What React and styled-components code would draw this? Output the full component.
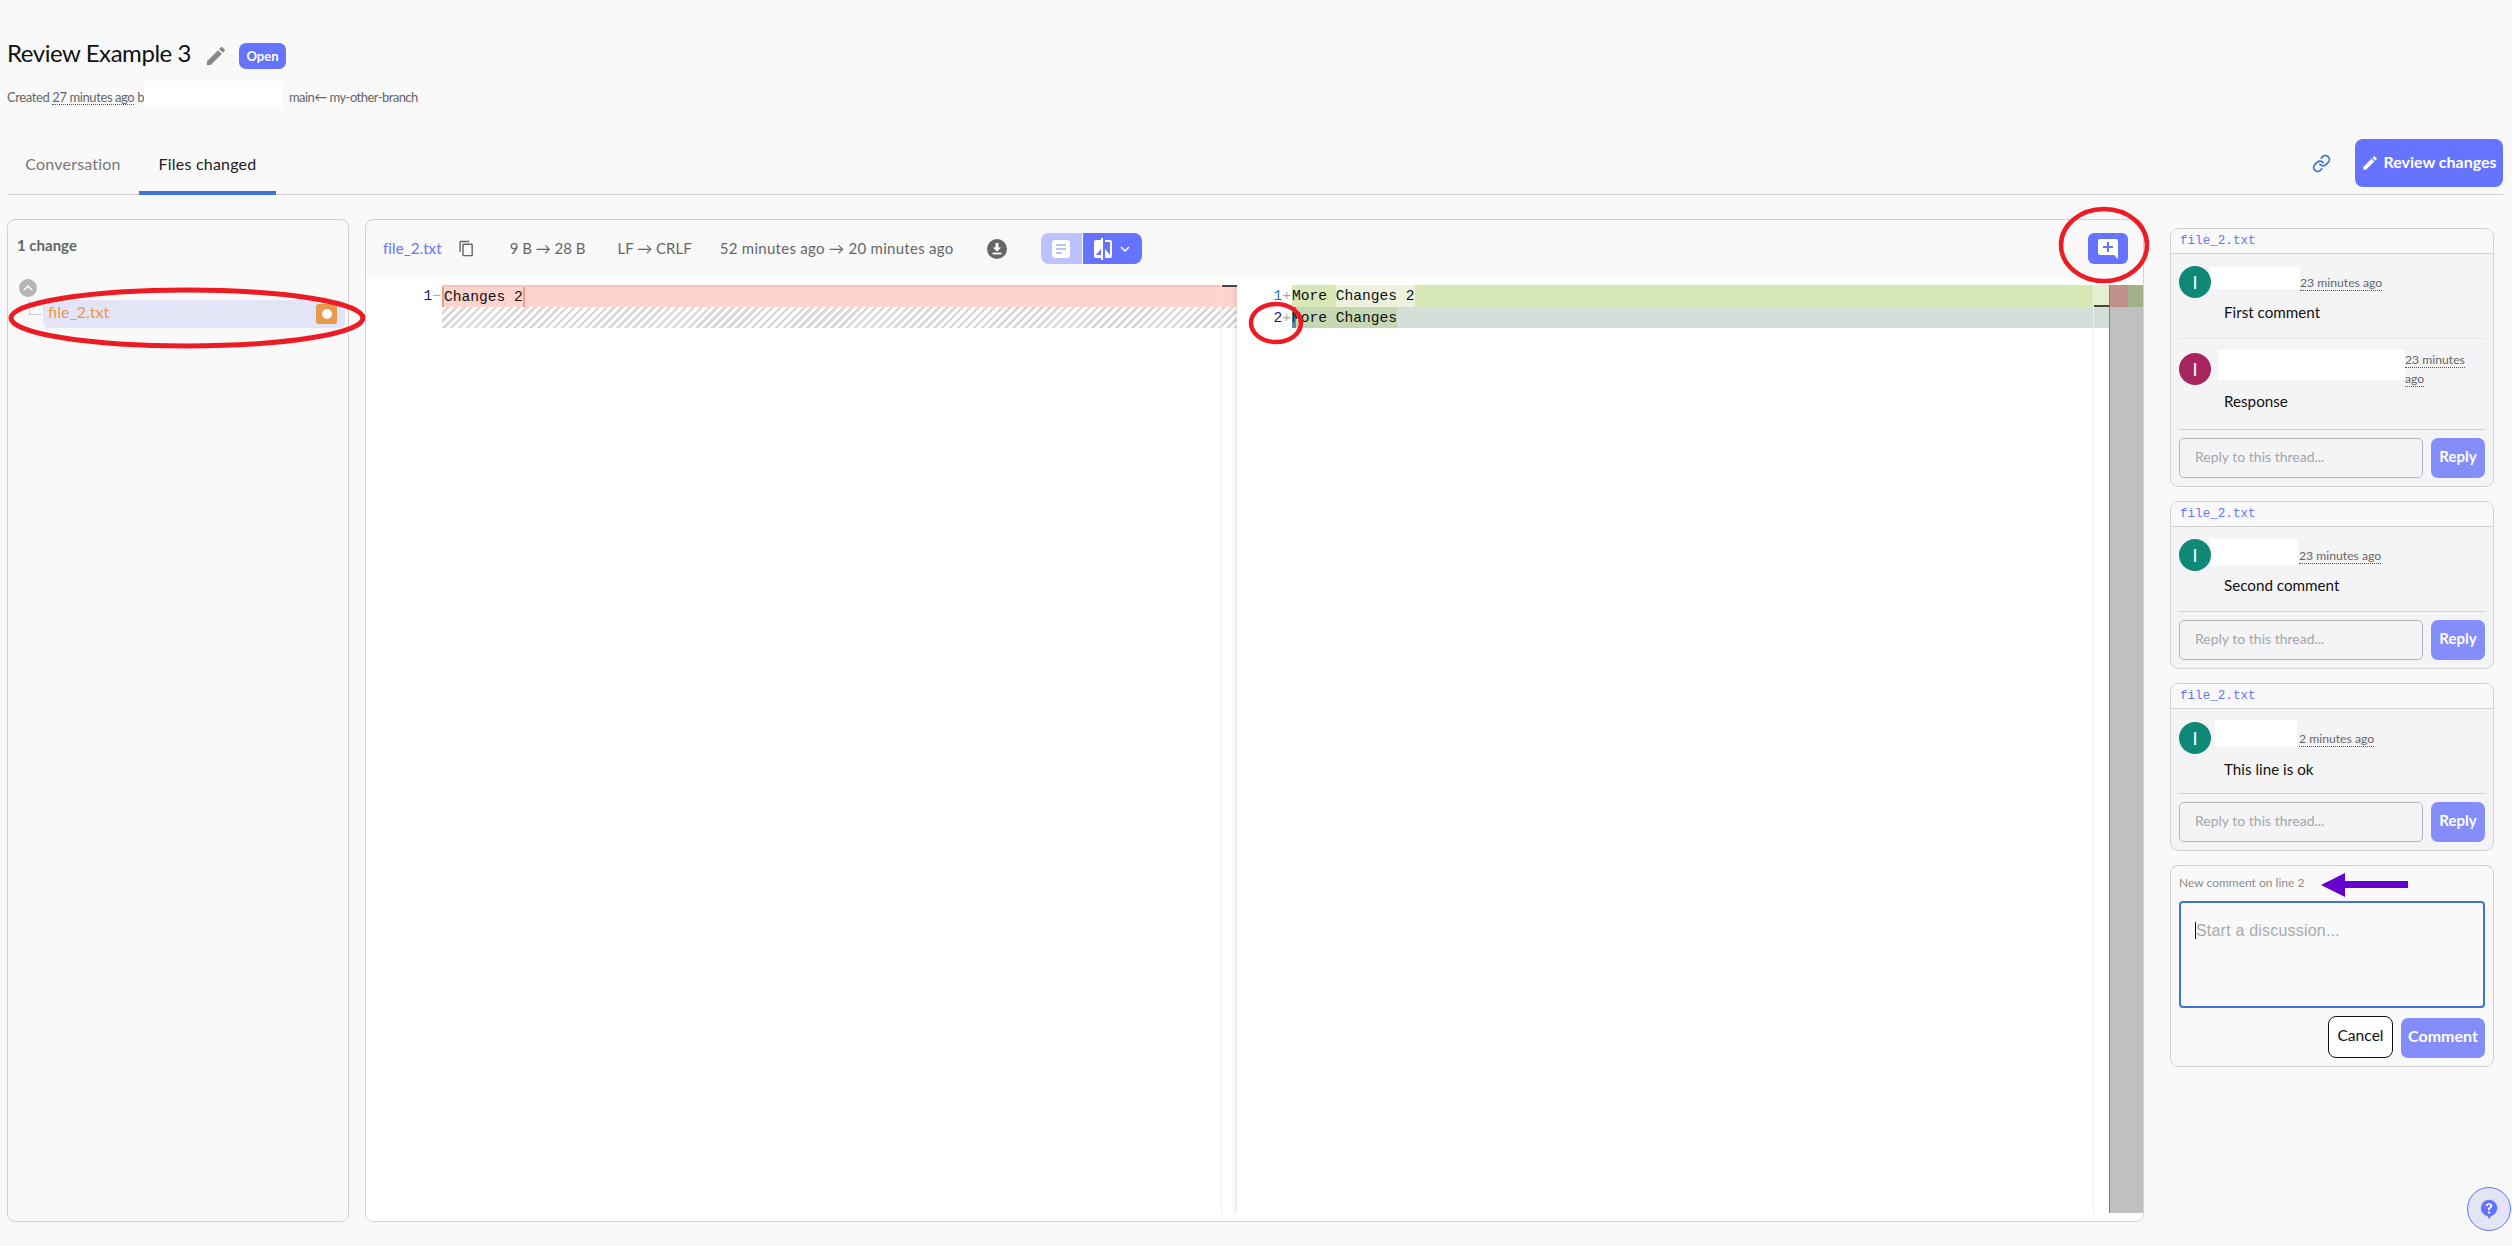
import React from "react";
import styled, { createGlobalStyle } from "styled-components";
import { MdEdit, MdContentCopy, MdExpandLess, MdExpandMore, MdAddComment, MdCompare } from "react-icons/md";
import { Link as LinkIcon } from "lucide-react";

const GlobalStyle = createGlobalStyle`
  html, body {
    margin: 0;
    padding: 0;
    background: #f9f9fa;
    font-family: Lato, "Open Sans", sans-serif;
    color: #111;
  }
  * { box-sizing: border-box; }
`;

const Page = styled.div`
  position: relative;
  width: 2512px;
  height: 1246px;
  overflow: hidden;
  padding: 43px 9px 0 7px;
`;

const TitleRow = styled.div`
  display: flex;
  align-items: center;
  height: 26px;
`;

const Title = styled.h1`
  margin: 0 0 6px;
  font-size: 24px;
  font-weight: 400;
  line-height: 26px;
  letter-spacing: -0.45px;
  color: #111;
`;

const TitleEdit = styled.span`
  display: flex;
  margin-left: 13px;
  color: #888;
  font-size: 24px;
`;

const Badge = styled.span`
  margin-left: 11px;
  width: 47px;
  height: 26px;
  border-radius: 7px;
  background: #6673ff;
  color: #fff;
  font-size: 13px;
  font-weight: 700;
  display: flex;
  align-items: center;
  justify-content: center;
`;

const SubRow = styled.div`
  display: flex;
  align-items: center;
  height: 26px;
  margin-top: 12px;
  padding-top: 6px;
  font-size: 13px;
  letter-spacing: -0.4px;
  color: #666;
  white-space: pre;
`;

const TimeAgo = styled.span`
  color: #666;
  border-bottom: 1px dotted #555;
  line-height: 14px;
`;

const BranchText = styled.span`
  margin-left: 3px;
  letter-spacing: -0.55px;
`;

const Redact = styled.span`
  display: block;
  flex: none;
  background: #fff;
  width: ${(props) => props.$w}px;
  height: ${(props) => props.$h}px;
  margin: ${(props) => props.$mt || 0}px 0 ${(props) => props.$mb || 0}px ${(props) => props.$ml || 0}px;
`;

const TabBar = styled.div`
  display: flex;
  align-items: center;
  height: 63px;
  margin-top: 25px;
  border-bottom: 1px solid #d2d2d2;
`;

const Tab = styled.div`
  height: 63px;
  width: ${(props) => props.$w}px;
  padding-top: ${(props) => (props.$active ? "4px" : "0")};
  display: flex;
  align-items: center;
  justify-content: center;
  font-size: 16px;
  letter-spacing: 0.2px;
  color: ${(props) => (props.$active ? "#222" : "#777")};
  border-bottom: ${(props) => (props.$active ? "4px solid #3f74d6" : "none")};
  margin-bottom: -1px;
`;

const TabActions = styled.div`
  margin-left: auto;
  display: flex;
  align-items: center;
  gap: 24px;
  color: #3f74d6;
`;

const ReviewButton = styled.button`
  width: 148px;
  height: 48px;
  border: none;
  border-radius: 8px;
  background: #6673ff;
  color: #fff;
  font-family: inherit;
  font-size: 16px;
  font-weight: 700;
  display: flex;
  align-items: center;
  justify-content: center;
  gap: 4px;
  padding: 0;
  white-space: nowrap;
`;

const ReviewLabel = styled.span`
  margin-bottom: 4px;
`;

const Columns = styled.div`
  display: grid;
  grid-template-columns: 342px 1779px 1fr;
  column-gap: 16px;
  margin-top: 24px;
  height: 1003px;
`;

const Panel = styled.div`
  border: 1px solid #d2d2d2;
  border-radius: 8px;
  background: #f9f9fa;
`;

const FilesPanel = styled(Panel)`
  padding: 0 3px 0 9px;
`;

const ChangeCount = styled.div`
  margin-top: 15px;
  height: 20px;
  line-height: 20px;
  font-size: 15px;
  font-weight: 700;
  color: #666;
`;

const Collapse = styled.span`
  display: flex;
  align-items: center;
  justify-content: center;
  width: 18px;
  height: 18px;
  margin: 24px 0 0 2px;
  border-radius: 50%;
  background: #b5b5b5;
  color: #fff;
  font-size: 18px;
`;

const TreeRow = styled.div`
  position: relative;
  display: flex;
  align-items: center;
  justify-content: space-between;
  margin: 3px 0 0 26px;
  height: 28px;
  padding: 0 8px 0 5px;
  background: #e3e5f7;
  border-radius: 6px;
  color: #e8994f;
  font-size: 16px;
  &::before {
    content: "";
    position: absolute;
    left: -14px;
    top: 0;
    width: 12px;
    height: 14px;
    border-left: 1px solid #ccc;
    border-bottom: 1px solid #ccc;
  }
`;

const TreeName = styled.span`
  margin-bottom: 5px;
`;

const FileStatus = styled.span`
  width: 21px;
  height: 20px;
  border-radius: 3px;
  background: #e8994a;
  display: flex;
  align-items: center;
  justify-content: center;
  &::after {
    content: "";
    width: 10px;
    height: 10px;
    border-radius: 50%;
    background: #fff;
  }
`;

const DiffPanel = styled(Panel)`
  display: flex;
  flex-direction: column;
  overflow: hidden;
`;

const DiffHeader = styled.div`
  display: flex;
  align-items: center;
  height: 57px;
  flex: none;
  padding: 0 15px 0 17px;
  font-size: 15px;
  color: #666;
`;

const FileLink = styled.span`
  color: #6673ff;
  letter-spacing: 0.1px;
  margin-bottom: 2px;
`;

const HeaderIcon = styled.span`
  display: flex;
  color: #666;
  font-size: 17px;
  margin-left: ${(props) => props.$ml || 0}px;
`;

const Meta = styled.span`
  margin: 0 0 2px ${(props) => props.$ml}px;
  letter-spacing: ${(props) => props.$ls || 0}px;
  white-space: nowrap;
`;

const Toggle = styled.div`
  display: flex;
  height: 31px;
  margin-left: 34px;
  border-radius: 8px;
  overflow: hidden;
`;

const PageSide = styled.span`
  width: 41px;
  display: flex;
  align-items: center;
  justify-content: center;
  background: #bcc2fb;
`;

const SplitSide = styled.span`
  width: 60px;
  display: flex;
  align-items: center;
  gap: 1px;
  padding-left: 8px;
  background: #6673ff;
  border-left: 1px solid #fff;
  color: #fff;
`;

const CommentButton = styled.button`
  margin-left: auto;
  width: 40px;
  height: 31px;
  padding: 0;
  border: none;
  border-radius: 6px;
  background: #6673ff;
  color: #fff;
  font-size: 24px;
  display: flex;
  align-items: center;
  justify-content: center;
`;

const DiffBody = styled.div`
  flex: 1;
  display: grid;
  grid-template-columns: 871px 872px 34px;
  background: #fff;
  padding: 8px 0;
`;

const Pane = styled.div`
  position: relative;
  min-width: 0;
  &::after {
    content: "";
    position: absolute;
    top: 0;
    bottom: 0;
    right: 15px;
    width: 1px;
    background: #eeeeee;
  }
  &::before {
    content: "";
    display: ${(props) => (props.$shadow ? "block" : "none")};
    position: absolute;
    top: 0;
    bottom: 0;
    right: 0;
    width: 5px;
    background: linear-gradient(to right, rgba(0, 0, 0, 0), rgba(0, 0, 0, 0.08));
  }
`;

const OverviewMark = styled.span`
  position: absolute;
  z-index: 1;
  right: 0;
  top: ${(props) => props.$top}px;
  width: 15px;
  height: 2px;
  background: #444;
`;

const Line = styled.div`
  display: flex;
  height: ${(props) => props.$h || 22}px;
  font-family: "Liberation Mono", monospace;
  font-size: 14.6px;
  line-height: 22px;
  color: #111;
  white-space: pre;
`;

const Gutter = styled.span`
  flex: none;
  width: ${(props) => props.$w}px;
  text-align: right;
  color: ${(props) => props.$color || "#1d1d6b"};
  padding-right: 1px;
`;

const Sign = styled.span`
  color: #aaa;
`;

const LineBody = styled.span`
  flex: 1;
  display: flex;
  min-width: 0;
  background: ${(props) => props.$bg};
`;

const RemovedBody = styled(LineBody)`
  border-top: 2px solid #f7c4bd;
  line-height: 20px;
`;

const Removed = styled.span`
  border-left: 2px solid #f59a8a;
  border-right: 2px solid #f59a8a;
`;

const Word = styled.span`
  background: ${(props) => props.$bg || "transparent"};
  box-shadow: ${(props) => (props.$mark ? "inset 4px 0 0 #5f86a8" : "none")};
`;

const Blank = styled.span`
  flex: 1;
`;

const Ghost = styled.span`
  flex: none;
  width: 15px;
  background: ${(props) => props.$bg};
`;

const Hatch = styled.div`
  height: 21px;
  margin-left: 76px;
  background: repeating-linear-gradient(-45deg, #d8d8d8 0 2.5px, #fff 2.5px 5.6px);
`;

const Minimap = styled.div`
  border-left: 1px solid #3f8fe0;
  background: #c0c0c0;
  display: flex;
  flex-direction: column;
`;

const MiniRow = styled.div`
  display: flex;
  height: 22px;
`;

const MiniCell = styled.span`
  flex: ${(props) => props.$grow};
  background: ${(props) => props.$bg};
`;

const Threads = styled.div`
  display: flex;
  flex-direction: column;
  gap: 14px;
  padding: 9px 9px 0 10px;
`;

const Thread = styled(Panel)`
  background: #f4f4f7;
  overflow: hidden;
`;

const ThreadFile = styled.div`
  height: 25px;
  padding-left: 9px;
  background: #f9f9fa;
  border-bottom: 1px solid #d2d2d2;
  font-family: "Liberation Mono", monospace;
  font-size: 12.6px;
  line-height: 25px;
  color: #6673ff;
`;

const CommentList = styled.div`
  padding: 0 8px;
`;

const Comment = styled.div`
  padding-top: 11px;
  height: ${(props) => props.$h}px;
  border-bottom: 1px solid ${(props) => (props.$last ? "#d2d2d2" : "#e6e6ea")};
`;

const CommentHead = styled.div`
  display: flex;
  align-items: center;
  min-height: 34px;
`;

const Avatar = styled.span`
  flex: none;
  width: 32px;
  height: 32px;
  border-radius: 50%;
  background: ${(props) => props.$bg};
  color: #fff;
  font-size: 18px;
  display: flex;
  align-items: center;
  justify-content: center;
  position: relative;
  z-index: 1;
`;

const CommentTime = styled.span`
  font-size: 12.2px;
  line-height: 19px;
  color: #666;
  margin-left: ${(props) => props.$ml || 0}px;
  & > span {
    border-bottom: 1px dotted #555;
  }
`;

const CommentText = styled.div`
  margin: 3px 0 0 45px;
  font-size: 15.2px;
  line-height: 20px;
  color: #111;
`;

const ReplyRow = styled.div`
  display: flex;
  justify-content: space-between;
  padding: 8px;
`;

const ReplyInput = styled.div`
  width: 244px;
  height: 40px;
  border: 1px solid #b5b5b8;
  border-radius: 5px;
  padding: 0 0 3px 15px;
  display: flex;
  align-items: center;
  font-size: 14px;
  color: #a5a5a8;
`;

const PrimaryButton = styled.button`
  width: ${(props) => props.$w}px;
  height: 40px;
  border: none;
  border-radius: 7px;
  background: #858dfb;
  color: #fff;
  font-family: inherit;
  font-size: ${(props) => props.$fs || 15}px;
  font-weight: 700;
  padding: 0 0 5px;
`;

const NewComment = styled(Panel)`
  padding: 9px 8px 8px;
  height: 202px;
`;

const NewCommentLabel = styled.div`
  height: 16px;
  line-height: 16px;
  font-size: 12px;
  color: #8d8d8d;
`;

const TextBox = styled.div`
  margin-top: 10px;
  height: 107px;
  border: 2px solid #3f74d6;
  border-radius: 4px;
  padding: 19px 14px;
  font-family: "Liberation Sans", sans-serif;
  font-size: 16px;
  line-height: 18px;
  color: #aaa;
  letter-spacing: 0.2px;
`;

const Caret = styled.span`
  display: inline-block;
  width: 1px;
  height: 17px;
  background: #111;
  vertical-align: -3px;
`;

const FormButtons = styled.div`
  display: flex;
  justify-content: flex-end;
  align-items: flex-end;
  gap: 8px;
  margin-top: 8px;
`;

const CancelButton = styled.button`
  width: 65px;
  height: 42px;
  border: 1px solid #111;
  border-radius: 8px;
  background: #fff;
  color: #111;
  font-family: inherit;
  font-size: 15.6px;
  padding: 0 0 5px;
`;

const HelpButton = styled.div`
  position: absolute;
  left: 2467px;
  top: 1187px;
  width: 44px;
  height: 44px;
  border: 1px solid #6673ff;
  border-radius: 50%;
  background: #e3e5f7;
  display: flex;
  align-items: center;
  justify-content: center;
`;

// red marks and the arrow somebody drew on top of the screenshot
const Annotations = styled.svg`
  position: absolute;
  left: 0;
  top: 0;
  pointer-events: none;
`;

function Download() {
  return (
    <svg width="20" height="20" viewBox="0 0 20 20">
      <circle cx="10" cy="10" r="10" fill="#666" />
      <path d="M8.5 4h3v4.5h2.7L10 12.6 5.8 8.5h2.7z" fill="#fff" />
      <rect x="5.5" y="13.6" width="9" height="1.8" fill="#fff" />
    </svg>
  );
}

function PageIcon() {
  return (
    <svg width="18" height="18" viewBox="0 0 18 18">
      <rect width="18" height="18" rx="3" fill="#fff" />
      <path d="M4 5h10M4 9h10M4 13h6" stroke="#bcc2fb" strokeWidth="1.8" />
    </svg>
  );
}

function HelpIcon() {
  return (
    <svg width="18" height="21" viewBox="0 0 24 28">
      <path d="M12 1a11 11 0 0 1 3 21.6L12 27l-2-4.2A11 11 0 0 1 12 1z" fill="#6673ff" />
      <path
        d="M12.1 5.5c-2.7 0-4.4 1.4-4.6 3.8h2.7c.1-1 .8-1.6 1.8-1.6s1.7.6 1.7 1.4c0 .8-.5 1.2-1.3 1.8-1.2.8-1.8 1.6-1.8 3.2v.4h2.6v-.4c0-.8.3-1.2 1.2-1.8 1.2-.8 2-1.8 2-3.3 0-2.2-1.8-3.5-4.3-3.5zM10.8 16.6h2.8v2.6h-2.8z"
        fill="#fff"
      />
    </svg>
  );
}

function ThreadCard({ comments }) {
  return (
    <Thread>
      <ThreadFile>file_2.txt</ThreadFile>
      <CommentList>
        {comments.map((c, i) => (
          <Comment key={i} $h={c.h} $last={i === comments.length - 1}>
            <CommentHead>
              <Avatar $bg={c.color}>I</Avatar>
              <Redact $w={c.rw} $h={c.rh} $ml={c.ml} $mb={c.mb} />
              <CommentTime $ml={c.tl}>
                <span>{c.time}</span>
              </CommentTime>
            </CommentHead>
            <CommentText>{c.text}</CommentText>
          </Comment>
        ))}
      </CommentList>
      <ReplyRow>
        <ReplyInput>Reply to this thread...</ReplyInput>
        <PrimaryButton $w={54}>Reply</PrimaryButton>
      </ReplyRow>
    </Thread>
  );
}

const threads = [
  [
    { color: "#0f8877", rw: 90, rh: 22, ml: -1, mb: 8, time: "23 minutes ago", text: "First comment", h: 85 },
    { color: "#a8245f", rw: 187, rh: 30, ml: 7, mb: 8, time: <>23 minutes<br />ago</>, text: "Response", h: 91 },
  ],
  [{ color: "#0f8877", rw: 88, rh: 27, ml: -1, mb: 7, tl: 1, time: "23 minutes ago", text: "Second comment", h: 85 }],
  [{ color: "#0f8877", rw: 82, rh: 27, ml: 4, mb: 9, tl: 2, time: "2 minutes ago", text: "This line is ok", h: 85 }],
];

export default function App() {
  return (
    <Page>
      <GlobalStyle />
      <TitleRow>
        <Title>Review Example 3</Title>
        <TitleEdit>
          <MdEdit />
        </TitleEdit>
        <Badge>Open</Badge>
      </TitleRow>
      <SubRow>
        Created <TimeAgo>27 minutes ago</TimeAgo> b
        <Redact $w={139} $h={26} $mt={-6} />
        <BranchText>{" main← my-other-branch"}</BranchText>
      </SubRow>
      <TabBar>
        <Tab $w={132}>Conversation</Tab>
        <Tab $w={137} $active>
          Files changed
        </Tab>
        <TabActions>
          <LinkIcon size={19} strokeWidth={2.2} />
          <ReviewButton>
            <MdEdit size={18} />
            <ReviewLabel>Review changes</ReviewLabel>
          </ReviewButton>
        </TabActions>
      </TabBar>
      <Columns>
        <FilesPanel>
          <ChangeCount>1 change</ChangeCount>
          <Collapse>
            <MdExpandLess />
          </Collapse>
          <TreeRow>
            <TreeName>file_2.txt</TreeName>
            <FileStatus />
          </TreeRow>
        </FilesPanel>
        <DiffPanel>
          <DiffHeader>
            <FileLink>file_2.txt</FileLink>
            <HeaderIcon $ml={16}>
              <MdContentCopy />
            </HeaderIcon>
            <Meta $ml={35}>9 B → 28 B</Meta>
            <Meta $ml={32}>LF → CRLF</Meta>
            <Meta $ml={28} $ls={0.29}>
              52 minutes ago → 20 minutes ago
            </Meta>
            <HeaderIcon $ml={33}>
              <Download />
            </HeaderIcon>
            <Toggle>
              <PageSide>
                <PageIcon />
              </PageSide>
              <SplitSide>
                <MdCompare size={24} />
                <MdExpandMore size={18} />
              </SplitSide>
            </Toggle>
            <CommentButton>
              <MdAddComment />
            </CommentButton>
          </DiffHeader>
          <DiffBody>
            <Pane $shadow>
              <OverviewMark $top={0} />
              <Line>
                <Gutter $w={76}>
                  1<Sign>−</Sign>
                </Gutter>
                <RemovedBody $bg="#ffd4ce">
                  <Removed>Changes 2</Removed>
                </RemovedBody>
              </Line>
              <Hatch />
            </Pane>
            <Pane>
              <OverviewMark $top={20} />
              <Line>
                <Gutter $w={55} $color="#237893">
                  1<Sign>+</Sign>
                </Gutter>
                <LineBody $bg="#d7e8b6">
                  <Word>More </Word>
                  <Word $bg="#eef2dd">Changes 2</Word>
                  <Blank />
                  <Ghost $bg="#e5efd0" />
                </LineBody>
              </Line>
              <Line $h={21}>
                <Gutter $w={55}>
                  2<Sign>+</Sign>
                </Gutter>
                <LineBody $bg="#d5dfda">
                  <Word $bg="#c5d8b4" $mark>
                    More Changes
                  </Word>
                </LineBody>
              </Line>
            </Pane>
            <Minimap>
              <MiniRow>
                <MiniCell $grow={18} $bg="#c0908a" />
                <MiniCell $grow={15} $bg="#a3b18a" />
              </MiniRow>
            </Minimap>
          </DiffBody>
        </DiffPanel>
        <Threads>
          {threads.map((comments, i) => (
            <ThreadCard key={i} comments={comments} />
          ))}
          <NewComment>
            <NewCommentLabel>New comment on line 2</NewCommentLabel>
            <TextBox>
              <Caret />
              Start a discussion...
            </TextBox>
            <FormButtons>
              <CancelButton>Cancel</CancelButton>
              <PrimaryButton $w={84} $fs={16}>
                Comment
              </PrimaryButton>
            </FormButtons>
          </NewComment>
        </Threads>
      </Columns>
      <HelpButton>
        <HelpIcon />
      </HelpButton>
      <Annotations width="2512" height="1246" viewBox="0 0 2512 1246">
        <ellipse cx="187" cy="318" rx="176" ry="28" fill="none" stroke="#ed1c24" strokeWidth="5" />
        <ellipse cx="1276" cy="323" rx="25" ry="19" fill="none" stroke="#ed1c24" strokeWidth="4.5" />
        <ellipse cx="2104" cy="245" rx="43" ry="36" fill="none" stroke="#ed1c24" strokeWidth="4.5" />
        <path d="M2321 885 L2345 873 L2345 881 L2408 881 L2408 888 L2345 888 L2345 897 Z" fill="#6600cc" />
      </Annotations>
    </Page>
  );
}
